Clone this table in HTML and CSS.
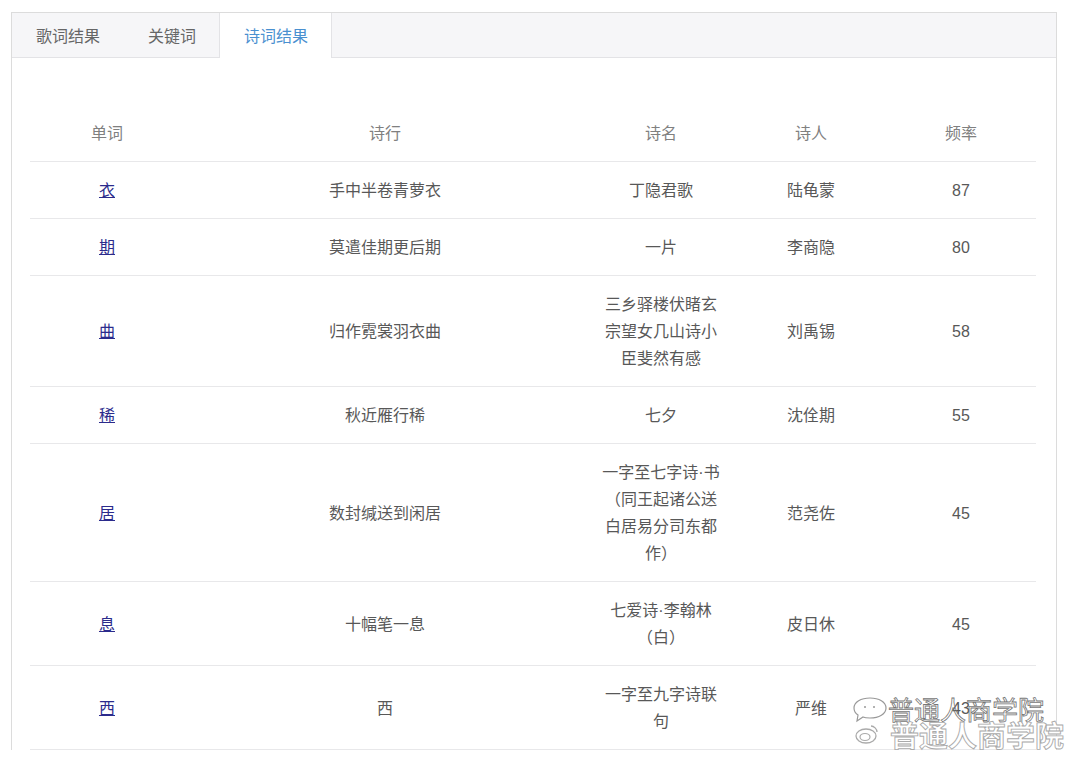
FILE: index.html
```html
<!DOCTYPE html>
<html lang="zh">
<head>
<meta charset="utf-8">
<link rel="stylesheet" href="styles.css">
</head>
<body>
<div class="panel">
  <div class="tabs">
    <div class="tab">歌词结果</div>
    <div class="tab">关键词</div>
    <div class="tab active">诗词结果</div>
  </div>
  <div class="panel-body">
    <table class="result">
      <colgroup>
        <col class="c1"><col class="c2"><col class="c3"><col class="c4"><col class="c5">
      </colgroup>
      <thead>
        <tr><th>单词</th><th>诗行</th><th>诗名</th><th>诗人</th><th>频率</th></tr>
      </thead>
      <tbody>
        <tr><td><a href="#">衣</a></td><td>手中半卷青萝衣</td><td>丁隐君歌</td><td>陆龟蒙</td><td>87</td></tr>
        <tr><td><a href="#">期</a></td><td>莫遣佳期更后期</td><td>一片</td><td>李商隐</td><td>80</td></tr>
        <tr><td><a href="#">曲</a></td><td>归作霓裳羽衣曲</td><td>三乡驿楼伏睹玄宗望女几山诗小臣斐然有感</td><td>刘禹锡</td><td>58</td></tr>
        <tr><td><a href="#">稀</a></td><td>秋近雁行稀</td><td>七夕</td><td>沈佺期</td><td>55</td></tr>
        <tr><td><a href="#">居</a></td><td>数封缄送到闲居</td><td>一字至七字诗·书（同王起诸公送白居易分司东都作）</td><td>范尧佐</td><td>45</td></tr>
        <tr><td><a href="#">息</a></td><td>十幅笔一息</td><td>七爱诗·李翰林（白）</td><td>皮日休</td><td>45</td></tr>
        <tr><td><a href="#">西</a></td><td>西</td><td>一字至九字诗联句</td><td>严维</td><td>43</td></tr>
      </tbody>
    </table>
  </div>
</div>
<div class="watermark">
  <div class="wm-line wm-top">
    <svg class="wm-bubble" width="44" height="30" viewBox="0 0 44 30"><path d="M6 14c0-6 7-10 16-10s16 4 16 10-7 10-16 10c-3 0-5 0-7-1l-6 4 1-6c-3-2-4-4-4-7z" fill="none" stroke="#999" stroke-width="1.2"/><circle cx="17" cy="13" r="1" fill="#999"/><circle cx="26" cy="13" r="1" fill="#999"/></svg>
    <span>普通人商学院</span>
  </div>
  <div class="wm-line wm-bottom">
    <svg class="wm-logo" width="26" height="22" viewBox="0 0 26 22"><ellipse cx="12" cy="13" rx="10" ry="7" fill="#fff" stroke="#aaa" stroke-width="1.3"/><ellipse cx="11" cy="14" rx="5" ry="3.5" fill="none" stroke="#aaa" stroke-width="1.2"/><path d="M17 3c3 0 6 3 6 6" fill="none" stroke="#aaa" stroke-width="1.3"/></svg>
    <span>普通人商学院</span>
  </div>
</div>
</body>
</html>
```

FILE: styles.css
```css
html, body {
  margin: 0;
  padding: 0;
  background: #fff;
}
body {
  padding: 12px 23px 0 11px;
  font-family: "Liberation Sans", "Noto Sans CJK SC", sans-serif;
  color: #555;
  overflow: hidden;
  height: 760px;
  box-sizing: border-box;
}
.panel {
  border: 1px solid #dcdcdc;
  border-bottom: none;
  width: 1046px;
  box-sizing: border-box;
}
.tabs {
  display: flex;
  height: 44px;
  background: #f6f6f8;
  border-bottom: 1px solid #e3e3e6;
}
.tab {
  padding: 0 24px;
  font-size: 16px;
  line-height: 44px;
  color: #666;
  font-family: "Noto Sans CJK SC", sans-serif;
}
.tab.active {
  background: #fff;
  color: #4a90d0;
  border-left: 1px solid #e3e3e6;
  border-right: 1px solid #e3e3e6;
  margin-bottom: -1px;
  height: 45px;
  padding: 0 23px 0 24px;
  margin-left: -1px;
}
.panel-body {
  padding: 47px 20px 0 18px;
}
.result {
  width: 1006px;
  border-collapse: collapse;
  table-layout: fixed;
  font-size: 16px;
}
.c1 { width: 154px; }
.c2 { width: 402px; }
.c3 { width: 150px; }
.c4 { width: 150px; }
.c5 { width: 150px; }
.result th,
.result td {
  text-align: center;
  vertical-align: middle;
  padding: 15px 12px 14px;
  line-height: 27px;
  border-bottom: 1px solid #e8e8ea;
}
.result th {
  font-weight: normal;
  color: #808080;
}
.result td {
  color: #585858;
}
.result td a {
  color: #2b2b8c;
  text-decoration: underline;
}
.watermark {
  position: absolute;
  left: 848px;
  top: 694px;
  font-family: "Noto Sans CJK SC", sans-serif;
  pointer-events: none;
}
.wm-line {
  display: flex;
  align-items: center;
  line-height: 28px;
}
.wm-top {
  font-size: 26px;
  color: transparent;
  -webkit-text-stroke: 0.8px #777;
}
.wm-top span {
  margin-left: -4px;
}
.wm-bottom {
  margin-top: -4px;
  margin-left: 6px;
  color: #fff;
  -webkit-text-stroke: 0.9px #aaa;
  font-size: 29px;
  font-weight: bold;
}
.wm-bottom span {
  margin-left: 10px;
}
```
